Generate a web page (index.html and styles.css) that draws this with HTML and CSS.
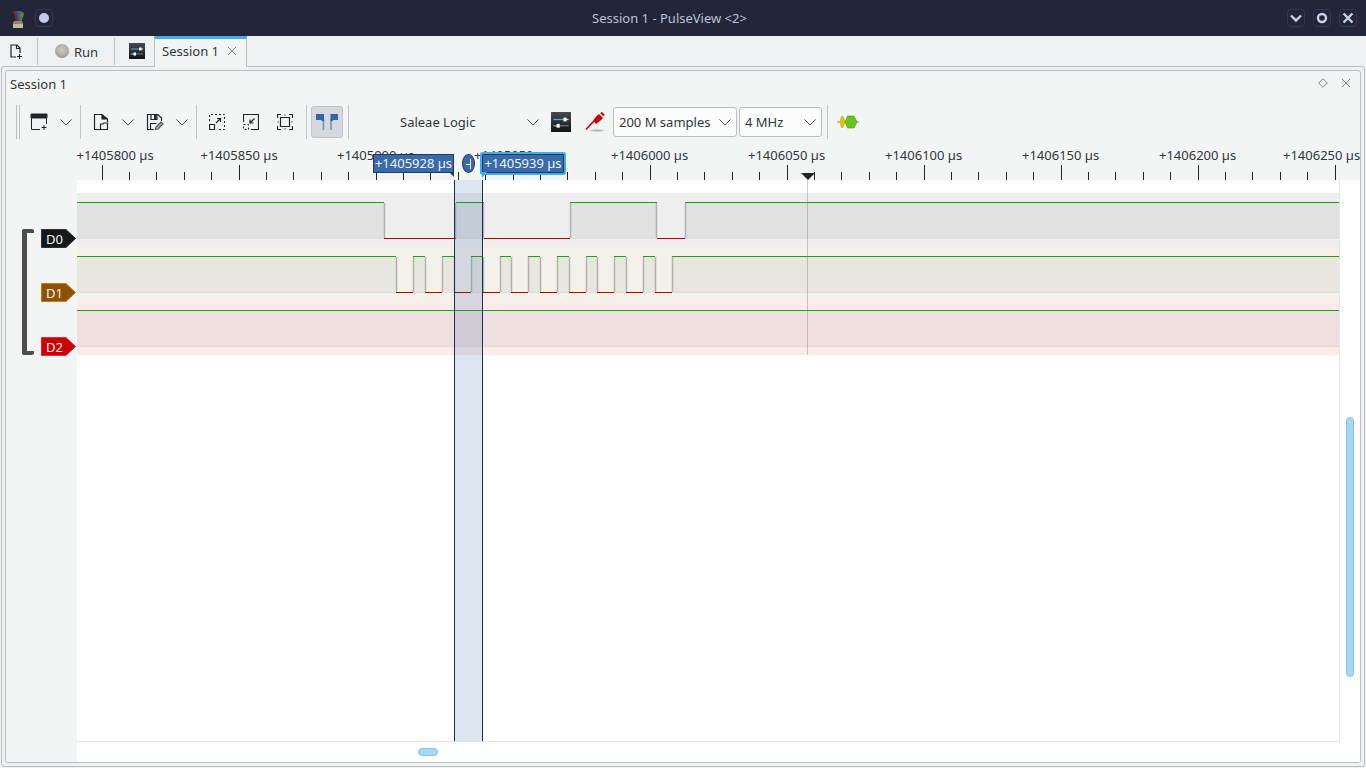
FILE: index.html
```html
<!DOCTYPE html>
<html lang="en">
<head>
    <meta charset="UTF-8">
    <title>Session 1 - PulseView &lt;2&gt;</title>
    <link rel="stylesheet" href="styles.css">
</head>
<body>

    <header class="titlebar">
        <div class="title-left">
            <svg class="app-icon" width="14" height="18" viewBox="0 0 14 18">
                <path d="M2 0 5 10H6.500L4.500 0z" fill="#7a2b2b"/>
                <path d="M4.500 0 6.500 10H7.500L7 0z" fill="#5b3f8a"/>
                <path d="M7 0 7.500 10H8.500L9.500 0z" fill="#3c6a9a"/>
                <path d="M9.500 0 8.500 10H9.500L12 1z" fill="#4f8a3f"/>
                <path d="M12 1 9.500 10H10.500L13 3z" fill="#8a7a3a"/>
                <path d="M3 10H11L12 12.500H2z" fill="#8f8674"/>
                <path d="M2 12.500H12V17H2z" fill="#c8b89a"/>
            </svg>
            <span class="win-btn"><svg width="16" height="16" viewBox="0 0 16 16"><circle cx="8" cy="8" r="5" fill="#c1cde8"/></svg></span>
        </div>
        <div class="title-text">Session 1 - PulseView &lt;2&gt;</div>
        <div class="title-right">
            <span class="win-btn"><svg width="16" height="16" viewBox="0 0 16 16"><path d="M3 5.500 8 10.500 13 5.500" fill="none" stroke="#c8d3ea" stroke-width="2.400"/></svg></span>
            <span class="win-btn"><svg width="16" height="16" viewBox="0 0 16 16"><circle cx="8" cy="8" r="4" fill="none" stroke="#c8d3ea" stroke-width="2.400"/></svg></span>
            <span class="win-btn"><svg width="16" height="16" viewBox="0 0 16 16"><path d="M3.500 3.500 12.500 12.500M12.500 3.500 3.500 12.500" fill="none" stroke="#c8d3ea" stroke-width="2.400"/></svg></span>
        </div>
    </header>

    <nav class="tabbar">
        <div class="tab-tool new-session">
            <svg width="16" height="16" viewBox="0 0 16 16" fill="none" stroke="#232629" stroke-width="1.200">
                <path d="M11 9V4L8 1H2V13H7"/>
                <path d="M7.500 1V4.500H11"/>
                <path d="M10.500 10V15M8 12.500H13" stroke-width="1"/>
            </svg>
        </div>
        <span class="tab-sep"></span>
        <div class="tab-tool run-btn">
            <span class="run-led"></span>
            <span>Run</span>
        </div>
        <span class="tab-sep"></span>
        <div class="tab-tool config-tab">
            <svg width="16" height="16" viewBox="0 0 16 16">
                <use href="#icon-config"/>
            </svg>
        </div>
        <div class="tab-active">
            <span>Session 1</span>
            <svg width="10" height="10" viewBox="0 0 10 10"><path d="M1 1 9 9M9 1 1 9" stroke="#7f8285" stroke-width="1" fill="none"/></svg>
        </div>
    </nav>

    <main class="frame">
        <section class="dock">
            <div class="dock-title">
                <span>Session 1</span>
                <div class="dock-btns">
                    <svg width="10" height="10" viewBox="0 0 10 10"><path d="M5 .7 9.300 5 5 9.300 .7 5z" fill="none" stroke="#7f8285"/></svg>
                    <svg width="10" height="10" viewBox="0 0 10 10"><path d="M1 1 9 9M9 1 1 9" stroke="#7f8285" fill="none"/></svg>
                </div>
            </div>

            <div class="toolbar">
                <span class="handle"></span>

                <button class="tool">
                    <svg width="18" height="18" viewBox="0 0 18 18" fill="none" stroke="#232629">
                        <path d="M1 1h16v4H1z" fill="#232629"/>
                        <path d="M1.500 4V16.500H10M16.500 4V11"/>
                        <path d="M14 12v5M11.500 14.500h5"/>
                    </svg>
                </button>
                <button class="chevron"><svg width="12" height="7" viewBox="0 0 12 7"><path d="M.5 .5 6 6 11.500 .5" fill="none" stroke="#4d4d4d"/></svg></button>
                <span class="sep"></span>

                <button class="tool">
                    <svg width="16" height="18" viewBox="0 0 16 18" fill="none" stroke="#232629" stroke-width="1.200">
                        <path d="M7 16.500H1.500V1.500H9L14.500 6V9"/>
                        <path d="M9 1.500 V6 H14.500" fill="#232629"/>
                        <path d="M7.500 11H10L11 10H14.500V16.500H7.500z"/>
                    </svg>
                </button>
                <button class="chevron"><svg width="12" height="7" viewBox="0 0 12 7"><path d="M.5 .5 6 6 11.500 .5" fill="none" stroke="#4d4d4d"/></svg></button>
                <button class="tool">
                    <svg width="18" height="18" viewBox="0 0 18 18" fill="none" stroke="#232629" stroke-width="1.200">
                        <path d="M8 16.500H1.500V1.500H12L15.500 5V8"/>
                        <path d="M5 1.500V6.500H11V1.500" />
                        <path d="M8 2h2.500v4H8z" fill="#232629" stroke="none"/>
                        <path d="M4.500 16.500V10.500H10.500"/>
                        <path d="M9.500 16.500 10 14 15 9 17 11 12 16z" stroke="#555" fill="#aaa"/>
                    </svg>
                </button>
                <button class="chevron"><svg width="12" height="7" viewBox="0 0 12 7"><path d="M.5 .5 6 6 11.500 .5" fill="none" stroke="#4d4d4d"/></svg></button>
                <span class="sep"></span>

                <button class="tool">
                    <svg width="16" height="16" viewBox="0 0 16 16" fill="none" stroke="#232629">
                        <path d="M.5 7V.5H15.500V15.500H9" stroke-dasharray="2 2"/>
                        <path d="M.5 10.500H5.500V15.500H.5z" stroke-width="1.200"/>
                        <path d="M7 9 11.500 4.500M8 4.500H11.500V8" stroke-width="1.200"/>
                    </svg>
                </button>
                <button class="tool">
                    <svg width="16" height="16" viewBox="0 0 16 16" fill="none" stroke="#232629">
                        <path d="M.5 8V.5H15.500V15.500H8" stroke-width="1.200"/>
                        <path d="M.5 10.500H5.500V15.500H.5z" stroke-dasharray="2 2"/>
                        <path d="M11.500 4.500 7 9M7 5.500V9H10.500" stroke-width="1.200"/>
                    </svg>
                </button>
                <button class="tool">
                    <svg width="16" height="16" viewBox="0 0 16 16" fill="none" stroke="#232629">
                        <path d="M.5 4V.5H4M12 .5H15.500V4M.5 12V15.500H4M12 15.500H15.500V12" stroke-width="1.200"/>
                        <path d="M3.500 3.500H12.500V12.500H3.500z" stroke-width="1.200"/>
                        <path d="M8 .5V2M8 14V15.500M.5 8H2M14 8H15.500" stroke="#888" stroke-width="1.500"/>
                    </svg>
                </button>
                <span class="sep"></span>

                <button class="tool toggled">
                    <svg width="22" height="18" viewBox="0 0 22 18">
                        <path d="M7.500 6V17M15 6V17" stroke="#6f93c4" stroke-width="1.600" fill="none"/>
                        <path d="M0 1H8V8L6.800 8.500 5 7H0z" fill="#2f66ad"/>
                        <path d="M22 1H14.500V8L15.700 8.500 17.500 7H22z" fill="#2f66ad"/>
                    </svg>
                </button>
                <span class="sep"></span>

                <div class="device">
                    <span>Saleae Logic</span>
                    <svg width="12" height="7" viewBox="0 0 12 7"><path d="M.5 .5 6 6 11.500 .5" fill="none" stroke="#4d4d4d"/></svg>
                </div>
                <button class="tool">
                    <svg width="20" height="20" viewBox="0 0 16 16">
                        <use href="#icon-config"/>
                    </svg>
                </button>
                <button class="tool">
                    <svg width="22" height="22" viewBox="0 0 22 22">
                        <ellipse cx="13" cy="19.500" rx="7" ry="1.200" fill="#bbb"/>
                        <path d="M2 18.500 10 10" stroke="#cc0000" stroke-width="1.600"/>
                        <path d="M9 9.500 12.500 5 15 3 19 7 16.500 9.500 12 13z" fill="#cc0000"/>
                        <path d="M17 1.500 20 4.500" stroke="#cc0000" stroke-width="2"/>
                    </svg>
                </button>
                <div class="combo combo-samples">
                    <span>200 M samples</span>
                    <svg width="12" height="7" viewBox="0 0 12 7"><path d="M.5 .5 6 6 11.500 .5" fill="none" stroke="#4d4d4d"/></svg>
                </div>
                <div class="combo combo-rate">
                    <span>4 MHz</span>
                    <svg width="12" height="7" viewBox="0 0 12 7"><path d="M.5 .5 6 6 11.500 .5" fill="none" stroke="#4d4d4d"/></svg>
                </div>
                <span class="sep"></span>
                <button class="tool">
                    <svg width="22" height="14" viewBox="0 0 22 14">
                        <path d="M0 7H22" stroke="#8a8a7a"/>
                        <path d="M4.500 1.500 3 7 4.500 12.500H6L8 7 6 1.500z" fill="#e8c400" stroke="#b89a00" stroke-width=".6"/>
                        <path d="M10.500 1 8 7 10.500 13H17L20 7 17 1z" fill="#66c41a" stroke="#4e9a06" stroke-width=".6"/>
                    </svg>
                </button>
            </div>

            <div class="view">
                <div class="headers">
                    <div class="bracket"></div>
                    <div class="signal-list">
                        <svg class="signal" width="36" height="19" viewBox="0 0 36 19">
                            <path class="sig-d0" d="M.5 .5H25L34.500 9.500 25 18.500H.5z"/>
                            <text x="5" y="14.500">D0</text>
                        </svg>
                        <svg class="signal" width="36" height="19" viewBox="0 0 36 19">
                            <path class="sig-d1" d="M.5 .5H25L34.500 9.500 25 18.500H.5z"/>
                            <text x="5" y="14.500">D1</text>
                        </svg>
                        <svg class="signal" width="36" height="19" viewBox="0 0 36 19">
                            <path class="sig-d2" d="M.5 .5H25L34.500 9.500 25 18.500H.5z"/>
                            <text x="5" y="14.500">D2</text>
                        </svg>
                    </div>
                </div>

                <div class="trace-col">
                    <div class="ruler">
                        <svg class="ruler-svg" width="1283" height="34" viewBox="77 146 1283 34">
                            <g class="ruler-text">
                                <text x="76.500" y="160">+1405800 µs</text>
                                <text x="200.500" y="160">+1405850 µs</text>
                                <text x="337" y="160">+1405900 µs</text>
                                <text x="474" y="160">+1405950 µs</text>
                                <text x="611" y="160">+1406000 µs</text>
                                <text x="748" y="160">+1406050 µs</text>
                                <text x="885" y="160">+1406100 µs</text>
                                <text x="1022" y="160">+1406150 µs</text>
                                <text x="1159" y="160">+1406200 µs</text>
                                <text x="1283" y="160">+1406250 µs</text>
                            </g>
                            <!-- major ticks every 50 us -->
                            <path class="tick" d="M102.500 165V180M239.500 165V180M376.500 165V180M513.500 165V180M650.500 165V180M787.500 165V180M924.500 165V180M1061.500 165V180M1198.500 165V180M1335.500 165V180"/>
                            <path class="tick" d="M129.500 172V180M156.500 172V180M184.500 172V180M211.500 172V180M266.500 172V180M293.500 172V180M321.500 172V180M348.500 172V180M403.500 172V180M430.500 172V180M458.500 172V180M485.500 172V180M540.500 172V180M567.500 172V180M595.500 172V180M622.500 172V180M677.500 172V180M704.500 172V180M732.500 172V180M759.500 172V180M814.500 172V180M841.500 172V180M869.500 172V180M896.500 172V180M951.500 172V180M978.500 172V180M1006.500 172V180M1033.500 172V180M1088.500 172V180M1115.500 172V180M1143.500 172V180M1170.500 172V180M1225.500 172V180M1252.500 172V180M1280.500 172V180M1307.500 172V180"/>
                            <path d="M801 173H815L808 180z" fill="#232629"/>
                        </svg>
                        <div class="flag flag-a">+1405928 µs</div>
                        <div class="flag-delta">
                            <svg width="8" height="12" viewBox="0 0 8 12"><path d="M1 6.500H5M5.500 1V11" stroke="#e8eef8" fill="none"/></svg>
                        </div>
                        <div class="flag flag-b">+1405939 µs</div>
                    </div>

                    <div class="scroll-area">
                        <div class="canvas">
                            <svg width="1262" height="561" viewBox="77 180 1262 561">
                                <rect class="band-0" x="77" y="193" width="1262" height="54"/>
                                <rect class="band-1" x="77" y="247" width="1262" height="54"/>
                                <rect class="band-2" x="77" y="301" width="1262" height="54"/>

                                <path class="shade-0" d="M77 203H384V238H77zM456 203H484V238H456zM570 203H657V238H570zM685 203H1339V238H685z"/>
                                <path class="shade-1" d="M77 257H396V292H77zM413 257H425V292H413zM442 257H454V292H442zM471 257H483V292H471zM500 257H511V292H500zM528 257H540V292H528zM557 257H569V292H557zM586 257H597V292H586zM614 257H626V292H614zM643 257H655V292H643zM672 257H1339V292H672z"/>
                                <path class="shade-2" d="M77 311H1339V346H77z"/>

                                <path class="baseline" d="M77 238.500H1339M77 292.500H1339M77 346.500H1339"/>
                                <path class="edge" d="M384.500 203V238M455.500 203V238M483.500 203V238M570.500 203V238M656.500 203V238M685.500 203V238M396.500 257V292M413.500 257V292M425.500 257V292M442.500 257V292M454.500 257V292M471.500 257V292M483.500 257V292M500.500 257V292M511.500 257V292M528.500 257V292M540.500 257V292M557.500 257V292M569.500 257V292M586.500 257V292M597.500 257V292M614.500 257V292M626.500 257V292M643.500 257V292M655.500 257V292M672.500 257V292"/>
                                <path class="wave-high" d="M77 202.500H384M456 202.500H484M570 202.500H657M685 202.500H1339M77 256.500H396M413 256.500H425M442 256.500H454M471 256.500H483M500 256.500H511M528 256.500H540M557 256.500H569M586 256.500H597M614 256.500H626M643 256.500H655M672 256.500H1339M77 310.500H1339"/>
                                <path class="wave-low" d="M384 238.500H456M484 238.500H570M657 238.500H685M396 292.500H413M425 292.500H442M454 292.500H471M483 292.500H500M511 292.500H528M540 292.500H557M569 292.500H586M597 292.500H614M626 292.500H643M655 292.500H672"/>

                                <rect class="cursor-fill" x="454" y="180" width="29" height="561"/>
                                <path class="cursor-line" d="M454.500 180V741M482.500 180V741"/>
                                <path class="marker-line" d="M807.500 180V355"/>
                            </svg>
                        </div>
                        <div class="thumb thumb-v"></div>
                        <div class="thumb thumb-h"></div>
                    </div>
                </div>
            </div>
        </section>
    </main>

    <!-- shared icon -->
    <svg class="defs" width="0" height="0">
        <defs>
            <linearGradient id="cfg-bg" x1="0" y1="0" x2="0" y2="1">
                <stop offset="0" stop-color="#464b50"/>
                <stop offset="1" stop-color="#111315"/>
            </linearGradient>
            <g id="icon-config">
                <rect width="16" height="16" fill="url(#cfg-bg)"/>
                <path d="M2 6H10" stroke="#4aa8e0"/>
                <path d="M10 6H14" stroke="#d8dde2"/>
                <rect x="10" y="4.500" width="2.500" height="3" fill="#fff"/>
                <path d="M2 11H14" stroke="#777"/>
                <path d="M2 11H5" stroke="#4aa8e0"/>
                <rect x="4.500" y="9.500" width="2.500" height="3" fill="#fff"/>
            </g>
        </defs>
    </svg>

</body>
</html>
```

FILE: styles.css
```css
* {
    box-sizing: border-box;
}
html, body {
    margin: 0;
    height: 768px;
    overflow: hidden;
}
body {
    width: 1366px;
    background-color: #eff0f1;
    font-family: 'Noto Sans', sans-serif;
    font-size: 13px;
    color: #31363b;
}
svg {
    display: block;
}
button {
    border: none;
    background: none;
    padding: 0;
    font: inherit;
}

/* window title */
.titlebar {
    height: 36px;
    display: grid;
    grid-template-columns: 1fr auto 1fr;
    align-items: center;
    background-color: #232639;
    color: #b9c2d6;
}
.title-text {
    margin-right: 27px;
}
.title-left {
    display: flex;
    align-items: center;
    padding-left: 11px;
}
.app-icon {
    margin-right: 10px;
    margin-top: 3px;
}
.title-right {
    display: flex;
    justify-content: flex-end;
    gap: 8px;
    padding-right: 9px;
}
.win-btn {
    width: 18px;
    height: 18px;
    display: flex;
    align-items: center;
    justify-content: center;
    border: 1px solid #31365a;
    border-radius: 4px;
}

/* tabs */
.tabbar {
    height: 30px;
    display: flex;
    align-items: stretch;
}
.tab-tool {
    display: flex;
    align-items: center;
    justify-content: center;
}
.new-session {
    width: 37px;
    padding-right: 4px;
    padding-top: 1px;
}
.tab-sep {
    width: 1px;
    margin: 2px 0 1px;
    background-color: #c4c6c8;
}
.run-btn {
    width: 76px;
    gap: 5px;
    padding-top: 2px;
    justify-content: flex-start;
    padding-left: 17px;
}
.run-led {
    width: 14px;
    height: 14px;
    border-radius: 50%;
    background: radial-gradient(circle at 50% 40%, #cfcfc8, #a8a8a0 60%, #7c7c7c);
    margin-top: -2px;
}
.config-tab {
    width: 39px;
    padding-left: 5px;
}
.tab-active {
    width: 93px;
    height: 31px;
    display: flex;
    align-items: center;
    gap: 8px;
    padding: 0 0 4px 7px;
    background-color: #f3f5f4;
    border-top: 3px solid #3daee9;
    border-left: 1px solid #bdbfc1;
    border-right: 1px solid #bdbfc1;
    position: relative;
    z-index: 1;
}

/* outer and dock frames */
.frame {
    height: 701px;
    margin: 0 1px;
    padding: 3px;
    background-color: #eff0f1;
    border: 1px solid #bcbebf;
    border-radius: 3px;
}
.dock {
    height: 693px;
    background-color: #f3f5f4;
    border: 1px solid #bcbebf;
    border-radius: 3px;
    display: flex;
    flex-direction: column;
}
.dock-title {
    height: 33px;
    flex: none;
    display: flex;
    align-items: center;
    justify-content: space-between;
    padding: 0 9px 7px 4px;
}
.dock-btns {
    display: flex;
    gap: 13px;
    margin-top: -3px;
}

/* toolbar */
.toolbar {
    height: 36px;
    flex: none;
    display: flex;
    align-items: center;
    padding-left: 10px;
}
.handle {
    width: 4px;
    height: 34px;
    border-left: 1px solid #bcbebf;
    border-right: 1px solid #bcbebf;
    margin-right: 2px;
}
.tool {
    width: 34px;
    height: 32px;
    flex: none;
    display: flex;
    align-items: center;
    justify-content: center;
}
.chevron {
    width: 20px;
    height: 32px;
    flex: none;
    display: flex;
    align-items: center;
    justify-content: center;
}
.sep {
    width: 1px;
    height: 34px;
    flex: none;
    margin: 0 3px 0 4px;
    background-color: #c4c6c8;
}
.toggled {
    width: 32px;
    margin: 0 1px;
    background-color: #d5d9dc;
    border: 1px solid #c1c5c8;
    border-radius: 3px;
}
.device {
    width: 191px;
    margin-left: 1px;
    padding: 0 5px 0 47px;
    display: flex;
    align-items: center;
    justify-content: space-between;
}
.combo {
    height: 30px;
    margin: 0 1px;
    padding: 0 5px;
    flex: none;
    display: flex;
    align-items: center;
    justify-content: space-between;
    background-color: #fcfcfc;
    border: 1px solid #bcbebf;
    border-radius: 3px;
}
.combo-samples {
    width: 124px;
}
.combo-rate {
    width: 83px;
}

/* trace view */
.view {
    flex: 1;
    margin-top: 6px;
    display: flex;
}
.headers {
    width: 71px;
    flex: none;
    display: flex;
    align-items: flex-start;
    padding: 83px 0 0 16px;
}
.bracket {
    width: 12px;
    height: 126px;
    border: solid #4d4d4d;
    border-width: 4px 0 4px 5px;
    border-radius: 2px;
}
.signal-list {
    margin-left: 7px;
    display: flex;
    flex-direction: column;
    gap: 35px;
}
.signal text {
    font-size: 13px;
    fill: #f4f4f4;
}
.sig-d0 {
    fill: #16191a;
    stroke: #2e3234;
}
.sig-d1 {
    fill: #8f5202;
    stroke: #c17d11;
}
.sig-d2 {
    fill: #cc0000;
    stroke: #ef2929;
}
.trace-col {
    width: 1283px;
    display: flex;
    flex-direction: column;
}
.ruler {
    height: 34px;
    flex: none;
    position: relative;
}
.ruler-text {
    font-size: 13px;
    fill: #31363b;
}
.tick {
    stroke: #232629;
    fill: none;
}
.flag {
    position: absolute;
    top: 8px;
    height: 19px;
    line-height: 17px;
    text-align: center;
    white-space: nowrap;
    color: #eef2f8;
    background-color: #3a6ba8;
    border: 1px solid #1c3b66;
}
.flag-a {
    left: 296px;
    width: 81px;
}
.flag-a::after {
    content: "";
    position: absolute;
    top: 100%;
    right: -1px;
    border-top: 5px solid #1c3b66;
    border-left: 5px solid transparent;
}
.flag-b {
    left: 405px;
    width: 82px;
    box-shadow: 0 0 0 2px #3daee9;
    border-radius: 1px;
}
.flag-b::after {
    content: "";
    position: absolute;
    top: 100%;
    left: -1px;
    border-top: 6px solid #3daee9;
    border-right: 5px solid transparent;
}
.flag-delta {
    position: absolute;
    top: 8px;
    left: 385px;
    width: 13px;
    height: 19px;
    display: flex;
    align-items: center;
    justify-content: center;
    background-color: #3a6ba8;
    border: 1px solid #1c3b66;
    border-radius: 50%;
}
.scroll-area {
    flex: 1;
    position: relative;
    background-color: #fff;
}
.canvas {
    width: 1263px;
    height: 562px;
    border-right: 1px solid #e8e8e8;
    border-bottom: 1px solid #e4e4e4;
}
.band-0 {
    fill: #eeeeee;
}
.band-1 {
    fill: #f4f0ea;
}
.band-2 {
    fill: #fbebe9;
}
.shade-0 {
    fill: #e1e1e1;
}
.shade-1 {
    fill: #e9e6df;
}
.shade-2 {
    fill: #efdfde;
}
.baseline {
    stroke: rgba(0, 0, 0, 0.07);
    fill: none;
}
.edge {
    stroke: #b2b2b2;
    stroke-width: 1.5;
    fill: none;
}
.wave-high {
    stroke: #14a80a;
    fill: none;
}
.wave-low {
    stroke: #b00000;
    fill: none;
}
.cursor-fill {
    fill: rgba(52, 101, 164, 0.17);
}
.cursor-line {
    stroke: #16305a;
    fill: none;
}
.marker-line {
    stroke: rgba(110, 110, 110, 0.35);
    fill: none;
}
.thumb {
    position: absolute;
    background-color: #a9d6ef;
    border: 1px solid #7fc8f0;
    border-radius: 4px;
}
.thumb-v {
    left: 1269px;
    top: 237px;
    width: 8px;
    height: 260px;
}
.thumb-h {
    left: 341px;
    top: 568px;
    width: 20px;
    height: 8px;
}
.defs {
    position: absolute;
}
```
